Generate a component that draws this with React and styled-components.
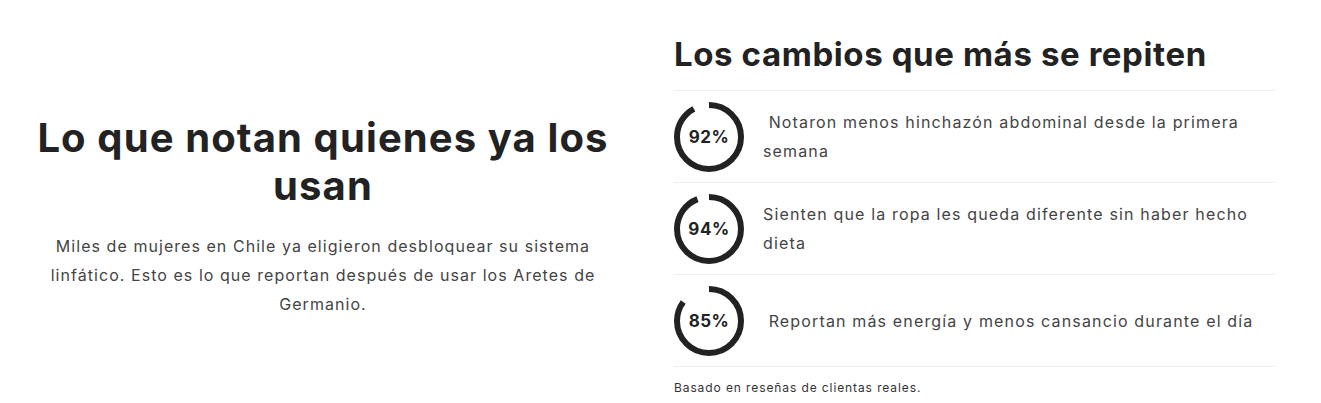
import styled, { createGlobalStyle } from "styled-components";

const GlobalStyle = createGlobalStyle`
  body {
    margin: 0;
    background: #fff;
    font-family: Inter, "Open Sans", sans-serif;
  }
`;

const stats = [
  { value: 92, text: " Notaron menos hinchazón abdominal desde la primera semana" },
  { value: 94, text: "Sienten que la ropa les queda diferente sin haber hecho dieta" },
  { value: 85, text: " Reportan más energía y menos cansancio durante el día" },
];

const Ring = ({ value }) => {
  const r = 32;
  const c = 2 * Math.PI * r;
  return (
    <RingBox>
      <svg width="70" height="70" viewBox="0 0 70 70">
        <circle
          cx="35"
          cy="35"
          r={r}
          fill="none"
          stroke="#222"
          strokeWidth="6"
          strokeDasharray={`${(c * value) / 100} ${c}`}
          transform="rotate(-90 35 35)"
        />
      </svg>
      <RingLabel>{value}%</RingLabel>
    </RingBox>
  );
};

const App = () => {
  return (
    <>
      <GlobalStyle />
      <Section>
        <Intro>
          <H1>Lo que notan quienes ya los usan</H1>
          <Lead>
            Miles de mujeres en Chile ya eligieron desbloquear su sistema linfático. Esto es lo que
            reportan después de usar los Aretes de Germanio.
          </Lead>
        </Intro>
        <Results>
          <H2>Los cambios que más se repiten</H2>
          <List>
            {stats.map(stat => (
              <Row key={stat.value}>
                <Ring value={stat.value} />
                <RowText>{stat.text}</RowText>
              </Row>
            ))}
          </List>
          <Note>Basado en reseñas de clientas reales.</Note>
        </Results>
      </Section>
    </>
  );
};

const Section = styled.section`
  display: grid;
  grid-template-columns: 1fr 601px;
  column-gap: 28px;
  padding: 34px 46px 0 0;
  height: 403px;
  box-sizing: border-box;
`;

const Intro = styled.div`
  display: flex;
  flex-direction: column;
  align-items: center;
  justify-content: center;
  text-align: center;
  padding-bottom: 4px;
`;

const H1 = styled.h1`
  font-size: 40px;
  line-height: 48px;
  font-weight: 700;
  color: #222;
  margin: 0 0 22px;
  max-width: 610px;
  letter-spacing: 1.1px;
`;

const Lead = styled.p`
  font-size: 16px;
  line-height: 29px;
  color: #444;
  margin: 0;
  max-width: 560px;
  letter-spacing: 1.05px;
`;

const Results = styled.div`
  display: flex;
  flex-direction: column;
`;

const H2 = styled.h2`
  font-size: 33px;
  line-height: 40px;
  font-weight: 700;
  color: #222;
  margin: 0 0 16px;
  letter-spacing: 0.6px;
`;

const List = styled.div`
  display: flex;
  flex-direction: column;
  border-top: 1px solid #eee;
`;

const Row = styled.div`
  display: flex;
  align-items: center;
  gap: 19px;
  padding: 11px 0 10px;
  border-bottom: 1px solid #eee;
`;

const RingBox = styled.div`
  position: relative;
  width: 70px;
  height: 70px;
  flex-shrink: 0;

  svg { display: block; }
`;

const RingLabel = styled.span`
  position: absolute;
  inset: 0;
  display: flex;
  align-items: center;
  justify-content: center;
  font-size: 17px;
  font-weight: 700;
  color: #222;
  letter-spacing: 0.5px;
`;

const RowText = styled.p`
  font-size: 16px;
  line-height: 29px;
  color: #444;
  margin: 0;
  letter-spacing: 1.15px;
  white-space: pre-wrap;
`;

const Note = styled.p`
  font-size: 12px;
  line-height: 18px;
  color: #333;
  margin: 12px 0 0;
  letter-spacing: 0.9px;
`;

export default App;
